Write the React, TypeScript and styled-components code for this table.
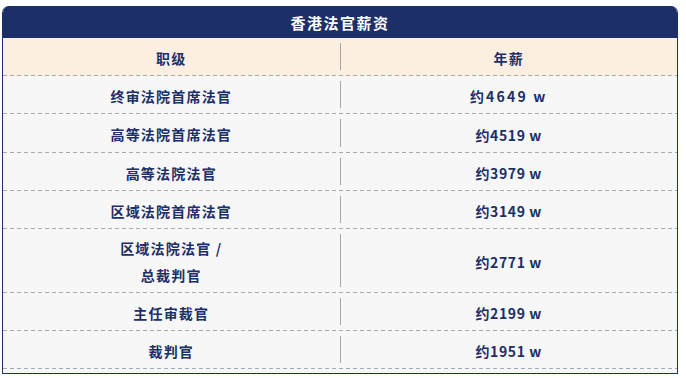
import styled, { createGlobalStyle } from 'styled-components';

const navy = '#1c2f68';

const rows = [
  { rank: ['终审法院首席法官'], pay: '约4649 w', wide: true },
  { rank: ['高等法院首席法官'], pay: '约4519 w', h: 39 },
  { rank: ['高等法院法官'], pay: '约3979 w' },
  { rank: ['区域法院首席法官'], pay: '约3149 w' },
  { rank: ['区域法院法官 /', '总裁判官'], pay: '约2771 w', h: 64 },
  { rank: ['主任审裁官'], pay: '约2199 w' },
  { rank: ['裁判官'], pay: '约1951 w' },
];

function App() {
  return (
    <>
      <GlobalStyle />
      <Card>
        <Title>香港法官薪资</Title>
        <Row $head>
          <Cell>职级</Cell>
          <Divider />
          <Cell>年薪</Cell>
        </Row>
        {rows.map((r) => (
          <Row key={r.pay} $height={r.h}>
            <Cell>
              {r.rank.map((line) => (
                <Line key={line}>{line}</Line>
              ))}
            </Cell>
            <Divider />
            <Cell $spacing={r.wide ? 2.2 : 0.6}>{r.pay}</Cell>
          </Row>
        ))}
      </Card>
    </>
  );
}

export default App;

const GlobalStyle = createGlobalStyle`
  body {
    margin: 0;
    background: #ffffff;
    font-family: "Noto Sans CJK SC", "Noto Sans", sans-serif;
  }
`;

const Card = styled.div`
  width: 676px;
  margin: 6px 0 0 2px;
  box-sizing: border-box;
  border: 1px solid ${navy};
  border-top: none;
  border-radius: 7px 7px 0 0;
  background: #f7f7f7;
  padding-bottom: 4px;
  overflow: hidden;
`;

const Title = styled.div`
  height: 32px;
  margin: 0 -1px;
  background: ${navy};
  color: #ffffff;
  font-size: 15px;
  font-weight: 700;
  letter-spacing: 1.5px;
  display: flex;
  align-items: center;
  justify-content: center;
  padding-top: 1px;
  box-sizing: border-box;
`;

const Row = styled.div<{ $head?: boolean; $height?: number }>`
  display: grid;
  grid-template-columns: 1fr 1px 1fr;
  height: ${(p) => p.$height ?? 38}px;
  box-sizing: border-box;
  padding-bottom: 1px;
  background:
    linear-gradient(to right, #a9a9a9 4px, transparent 4px) left bottom / 7px 1px repeat-x,
    ${(p) => (p.$head ? '#fcefe2' : '#f7f7f7')};
`;

const Cell = styled.div<{ $spacing?: number }>`
  display: flex;
  flex-direction: column;
  align-items: center;
  justify-content: center;
  color: ${navy};
  font-size: 14px;
  font-weight: 700;
  letter-spacing: ${(p) => p.$spacing ?? 1.2}px;
  padding-top: 3px;
`;

const Line = styled.span`
  line-height: 27px;
`;

const Divider = styled.div`
  background: #a6a6a6;
  margin: 5px 0 5px;
`;
